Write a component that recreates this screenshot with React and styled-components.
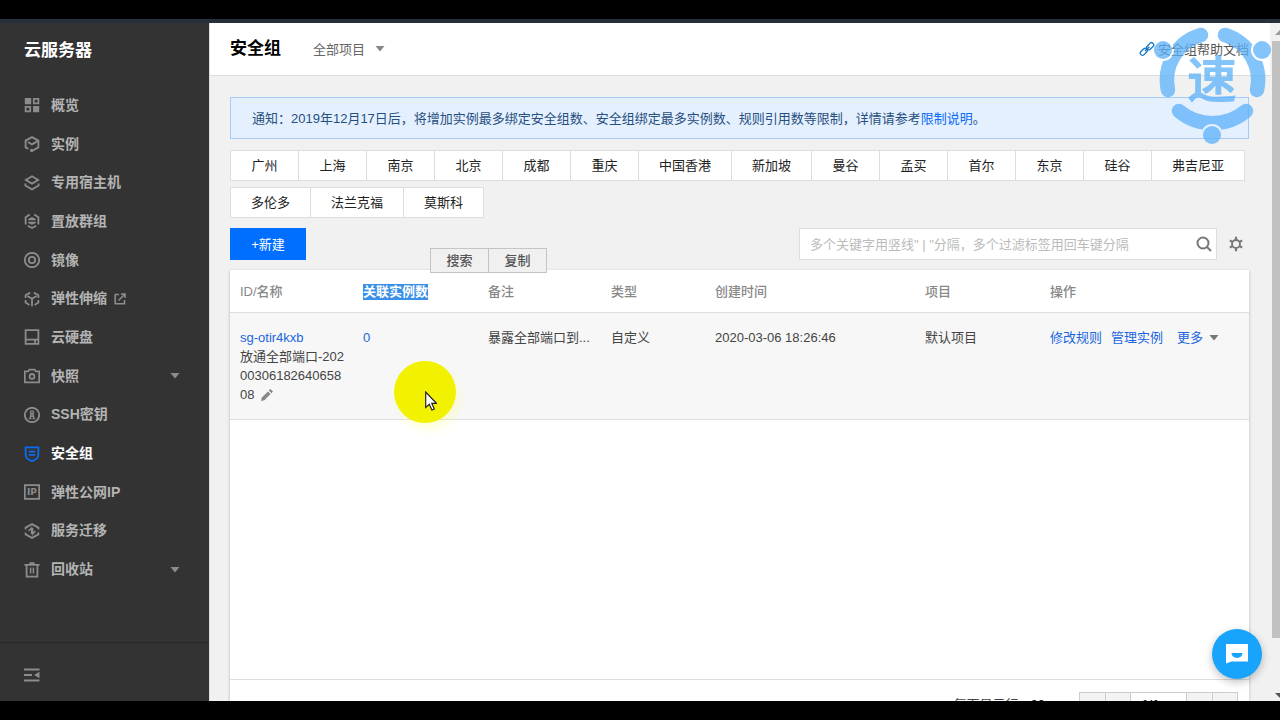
// src/pages/SecurityGroupPage.jsx
import React, { useState } from 'react';
import styled, { createGlobalStyle } from 'styled-components';

const REGIONS = [
  '广州', '上海', '南京', '北京', '成都', '重庆', '中国香港', '新加坡', '曼谷',
  '孟买', '首尔', '东京', '硅谷', '弗吉尼亚', '多伦多', '法兰克福', '莫斯科',
];

const MENU = [
  { label: '概览', icon: 'overview' },
  { label: '实例', icon: 'instance' },
  { label: '专用宿主机', icon: 'host' },
  { label: '置放群组', icon: 'group' },
  { label: '镜像', icon: 'image' },
  { label: '弹性伸缩', icon: 'scaling', external: true },
  { label: '云硬盘', icon: 'disk' },
  { label: '快照', icon: 'snapshot', expandable: true },
  { label: 'SSH密钥', icon: 'ssh' },
  { label: '安全组', icon: 'shield' },
  { label: '弹性公网IP', icon: 'ip' },
  { label: '服务迁移', icon: 'migrate' },
  { label: '回收站', icon: 'trash', expandable: true },
];

const ICONS = {
  overview: (
    <>
      <path d="M.8 1h6.4v6.2H.8zM9 9h6.2v6.2H9z" fill="currentColor" stroke="none" />
      <path d="M9.8 1.8h4.6v4.6H9.8zM1.6 9.8h4.6v4.6H1.6z" />
    </>
  ),
  instance: (
    <>
      <path d="M4.4 12.9L1.6 11.4V4.6L8 1.1l6.4 3.5v6.8L8 15" />
      <path d="M4 6L8 8.4l6-3.5" />
      <circle cx="7.6" cy="14.4" r="1.6" fill="currentColor" stroke="none" />
    </>
  ),
  host: (
    <>
      <path d="M8 1.2l6.2 3.7L8 8.6 1.8 4.9z" />
      <path d="M1.4 8.4v2.2L8 14.5l6.6-3.9V8.4" />
    </>
  ),
  group: (
    <>
      <path d="M5.8 1.6L1.6 4.2v7.2M10.2 1.6l4.2 2.6v7.2M3.8 12.8L8 15l4.2-2.2" />
      <path d="M4.4 6.6L8 4.8l3.6 1.8zM4.4 9.4L8 11l3.6-1.6z" strokeWidth="1.3" />
    </>
  ),
  image: (
    <>
      <circle cx="8" cy="8" r="7.2" />
      <circle cx="8" cy="8" r="3.2" />
    </>
  ),
  scaling: (
    <>
      <path d="M6.2 1.6L1.6 4.2v2.8M9.8 1.6l4.6 2.6v2.8M1.6 9v2.6L5.4 14M14.4 9v2.6L10.6 14" />
      <path d="M3.4 5L8 7.8 12.600 5M8 7.800V15.500" />
    </>
  ),
  disk: (
    <>
      <path d="M1.6 1.2h12.8v13.6H1.6zM1.6 10.6h12.8" />
      <path d="M11 10.6v4" />
    </>
  ),
  snapshot: (
    <>
      <path d="M.8 3.4h3.4l1.2-1.8h5.2l1.2 1.8h3.4v11H.8z" />
      <circle cx="8" cy="8.4" r="2.4" />
    </>
  ),
  ssh: (
    <>
      <circle cx="8" cy="8" r="7.2" />
      <circle cx="8" cy="5.4" r="1.5" strokeWidth="1.4" />
      <path d="M7 7l-.8 4.400M9 7l.8 4.400M5 11.600h2.400M8.600 11.600H11M6.600 9.300h2.800" strokeWidth="1.4" />
    </>
  ),
  shield: (
    <>
      <path d="M1.6 1.4h12.800V9c0 2.800-2.600 4.800-6.400 6.200C4.200 13.800 1.600 11.800 1.600 9z" />
      <path d="M4.8 5.600h6.400M4.800 8.800h6.400" />
    </>
  ),
  migrate: (
    <>
      <path d="M1.6 6.400V4.600L8 1.100l6.400 3.500v1.800M1.600 9.600v1.800L8 14.900l6.400-3.500V9.600" />
      <path d="M7.600 11V5L4.600 8M8.600 5v6l2.800-3" strokeWidth="1.5" />
    </>
  ),
  trash: (
    <>
      <path d="M.4 2.800h15.200M5.400 1.200h5.200M2.600 3.800v10.800h10.800V3.800" />
      <path d="M6.600 5.600v6M9.400 5.600v6" strokeWidth="1.5" />
    </>
  ),
  ip: (
    <>
      <path d="M.8 1.200h14.400v13.600H.8z" />
      <text x="8" y="11.400" textAnchor="middle" fontSize="9" fontWeight="700" fontFamily="DejaVu Sans, sans-serif" fill="currentColor" stroke="none">IP</text>
    </>
  ),
};

const Caret = () => (
  <svg width="10" height="6" viewBox="0 0 10 6" aria-hidden="true">
    <path d="M.5 0h9L5 5.5z" fill="currentColor" />
  </svg>
);

function Watermark() {
  return (
    <WatermarkBox>
      <svg width="120" height="120" viewBox="0 0 120 120" aria-hidden="true">
        <mask id="dots">
          <rect width="120" height="120" fill="#fff" />
          <circle cx="11" cy="25" r="11" fill="#000" />
          <circle cx="110" cy="25" r="11" fill="#000" />
          <circle cx="60" cy="110" r="11" fill="#000" />
        </mask>
        <g mask="url(#dots)" fill="none" stroke="#5db2fa" strokeWidth="14.5" strokeLinecap="round">
          <path d="M49 10A47 47 0 0 0 16 65" />
          <path d="M73 10A47 47 0 0 1 105 65" />
          <path d="M27 86A52 52 0 0 0 94 86" />
        </g>
        <g fill="#5db2fa">
          <circle cx="11" cy="25" r="9" />
          <circle cx="110" cy="25" r="9" />
          <circle cx="60" cy="110" r="9" />
        </g>
      </svg>
      <span>速</span>
    </WatermarkBox>
  );
}

export default function SecurityGroupPage() {
  const [keyword, setKeyword] = useState('');

  return (
    <Screen>
      <GlobalStyle />
      <Body>
        <Sidebar>
          <SidebarTitle>云服务器</SidebarTitle>
          <Menu>
            {MENU.map((item) => (
              <MenuItem key={item.label}>
                <MenuLink href="#" $active={item.label === '安全组'}>
                  <svg width="16" height="16" viewBox="0 0 16 16" fill="none" stroke="currentColor" strokeWidth="1.8" aria-hidden="true">
                    {ICONS[item.icon]}
                  </svg>
                  <span>{item.label}</span>
                  {item.external && (
                    <ExternalIcon width="12" height="12" viewBox="0 0 12 12" fill="none" stroke="currentColor" strokeWidth="1.6">
                      <path d="M5 1.500H1.200v9.300h9.300V7M7 1h4v4M11 1L4.500 7.500" />
                    </ExternalIcon>
                  )}
                  {item.expandable && <MenuCaret><Caret /></MenuCaret>}
                </MenuLink>
              </MenuItem>
            ))}
          </Menu>
          <SidebarFooter>
            <IconButton type="button" aria-label="收起菜单">
              <svg width="16" height="14" viewBox="0 0 16 14" aria-hidden="true">
                <path d="M0 1.500h15.500M0 7h8M0 12.500h15.500" stroke="currentColor" strokeWidth="2" />
                <path d="M15.500 3.800v6.400L10 7z" fill="currentColor" />
              </svg>
            </IconButton>
          </SidebarFooter>
        </Sidebar>

        <Main>
          <Header>
            <Title>安全组</Title>
            <Project>
              <ProjectSelect aria-label="项目">
                <option>全部项目</option>
              </ProjectSelect>
              <Caret />
            </Project>
            <HelpLink href="#">
              <svg width="16" height="16" viewBox="0 0 16 16" fill="none" stroke="#1f7ac4" strokeWidth="1.4" aria-hidden="true">
                <rect x="7.2" y="3" width="8" height="4.4" rx="2.2" transform="rotate(-45 11.2 5.2)" />
                <rect x=".8" y="8.6" width="8" height="4.4" rx="2.2" transform="rotate(-45 4.8 10.8)" />
                <path d="M6 10l4.400-4.200" />
              </svg>
              安全组帮助文档
            </HelpLink>
            <Watermark />
          </Header>

          <Content>
            <Notice>
              通知：2019年12月17日后，将增加实例最多绑定安全组数、安全组绑定最多实例数、规则引用数等限制，详情请参考<a href="#">限制说明</a>。
            </Notice>

            <Regions>
              {REGIONS.map((name) => (
                <RegionButton key={name} type="button">{name}</RegionButton>
              ))}
            </Regions>

            <Toolbar>
              <CreateButton type="button">+新建</CreateButton>
              <SearchBox>
                <SearchInput
                  aria-label="搜索安全组"
                  value={keyword}
                  onChange={(e) => setKeyword(e.target.value)}
                  placeholder={'多个关键字用竖线" | "分隔，多个过滤标签用回车键分隔'}
                />
                <IconButton type="button" aria-label="搜索">
                  <svg width="16" height="16" viewBox="0 0 16 16" fill="none" stroke="#777" strokeWidth="2" aria-hidden="true">
                    <circle cx="7" cy="7" r="5.5" />
                    <path d="M11 11l4 4" />
                  </svg>
                </IconButton>
              </SearchBox>
              <IconButton type="button" aria-label="设置">
                <svg width="14" height="16" viewBox="0 0 14 16" fill="none" stroke="#777" aria-hidden="true">
                  <circle cx="7" cy="8" r="4" strokeWidth="1.8" />
                  <path d="M7 .8v3M7 12.200v3M.8 4.400l2.600 1.500M10.600 10.100l2.600 1.500M.8 11.600l2.600-1.500M10.600 5.900l2.600-1.500" strokeWidth="2.2" />
                </svg>
              </IconButton>
            </Toolbar>

            <Panel>
              <Table>
                <colgroup>
                  <Col $w={123} />
                  <Col $w={125} />
                  <Col $w={123} />
                  <Col $w={104} />
                  <Col $w={210} />
                  <Col $w={125} />
                  <Col $w={209} />
                </colgroup>
                <thead>
                  <tr>
                    <Th>ID/名称</Th>
                    <Th>
                      <Selected>关联实例数</Selected>
                      <SelectionMenu>
                        <button type="button">搜索</button>
                        <button type="button">复制</button>
                      </SelectionMenu>
                    </Th>
                    <Th>备注</Th>
                    <Th>类型</Th>
                    <Th>创建时间</Th>
                    <Th>项目</Th>
                    <Th>操作</Th>
                  </tr>
                </thead>
                <tbody>
                  <tr>
                    <Td>
                      <a href="#">sg-otir4kxb</a>
                      <div>
                        放通全部端口-2020030618264065808
                        <EditButton type="button" aria-label="编辑名称">
                          <svg width="12" height="12" viewBox="0 0 12 12" aria-hidden="true">
                            <path d="M0 12l.8-3.400L7 2.400 9.600 5 3.400 11.200zM7.800 1.600L9.400 0 12 2.600l-1.600 1.600z" fill="#888" />
                          </svg>
                        </EditButton>
                      </div>
                    </Td>
                    <Td><a href="#">0</a></Td>
                    <Td>暴露全部端口到...</Td>
                    <Td>自定义</Td>
                    <Td>2020-03-06 18:26:46</Td>
                    <Td>默认项目</Td>
                    <Td>
                      <Actions>
                        <a href="#">修改规则</a>
                        <a href="#">管理实例</a>
                        <MoreButton type="button">更多 <Caret /></MoreButton>
                      </Actions>
                    </Td>
                  </tr>
                </tbody>
              </Table>
              <Pagination>
                <span>每页显示行</span>
                <PageSize>20</PageSize>
                <Pager>
                  <button type="button" aria-label="第一页" />
                  <button type="button" aria-label="上一页" />
                  <strong>1/1</strong>
                  <button type="button" aria-label="下一页" />
                  <button type="button" aria-label="最后一页" />
                </Pager>
              </Pagination>
              <Pointer>
                <svg width="12" height="20" viewBox="0 0 12 20" aria-hidden="true">
                  <path d="M.7 1v15.500l3.600-3.300 2.600 5.800 2.400-1-2.500-5.700h4.600z" fill="#fff" stroke="#222" strokeWidth="1.2" />
                </svg>
              </Pointer>
            </Panel>
          </Content>

          <ChatButton type="button" aria-label="在线客服">
            <svg width="22" height="20" viewBox="0 0 22 20" aria-hidden="true">
              <path d="M0 0h22v17.400H5.500L0 19.500z" fill="#fff" />
              <path d="M5.500 9h11a5.500 5 0 0 1-11 0z" fill="#18a3fc" />
            </svg>
          </ChatButton>
        </Main>

        <Scrollbar>
          <ScrollArrow viewBox="0 0 8 6"><path d="M8 0v5H3z" fill="#9a9a9a" /></ScrollArrow>
          <Thumb />
          <ScrollArrow viewBox="0 0 8 6"><path d="M3 0h5v5z" fill="#555" /></ScrollArrow>
        </Scrollbar>
      </Body>
    </Screen>
  );
}

const GlobalStyle = createGlobalStyle`
  * {
    box-sizing: border-box;
  }

  body {
    margin: 0;
    background: #000;
    color: #444;
    font-family: "Liberation Sans", "Noto Sans CJK SC", sans-serif;
    font-size: 13px;
    line-height: 19px;
  }

  button,
  input,
  select {
    font: inherit;
    color: inherit;
  }

  a {
    color: #1a66e0;
    text-decoration: none;
  }

  svg {
    flex: none;
  }
`;

const Screen = styled.div`
  height: 100vh;
  padding: 19px 0;
  background: #000;
`;

const Body = styled.div`
  display: flex;
  height: 100%;
  border-top: 4px solid #272f3d;
  overflow: hidden;
`;

const Sidebar = styled.aside`
  display: flex;
  flex-direction: column;
  flex: none;
  width: 210px;
  background: #333;
  border-right: 1px solid #ddd;
`;

const SidebarTitle = styled.h2`
  margin: 0;
  padding: 16px 24px 23px;
  color: #fff;
  font-size: 17px;
  line-height: 24px;
`;

const Menu = styled.ul`
  display: grid;
  grid-auto-rows: 1fr;
  flex: 1;
  margin: 0;
  padding: 0 0 53px;
  list-style: none;
`;

const MenuItem = styled.li`
  display: flex;
`;

const MenuLink = styled.a`
  display: flex;
  align-items: center;
  flex: 1;
  gap: 11px;
  padding: 0 29px 0 24px;
  color: ${(props) => (props.$active ? '#fff' : '#b4b4b4')};
  font-size: 14px;
  font-weight: 700;

  svg {
    color: ${(props) => (props.$active ? '#0a6cf5' : '#8c8c8c')};
  }
`;

const ExternalIcon = styled.svg`
  margin-left: -4px;
`;

const MenuCaret = styled.span`
  display: flex;
  margin-left: auto;
`;

const IconButton = styled.button`
  display: flex;
  padding: 0;
  border: none;
  background: none;
  cursor: pointer;
`;

const SidebarFooter = styled.div`
  display: flex;
  align-items: center;
  height: 59px;
  padding: 6px 24px 0;
  border-top: 1px solid #292929;
  color: #8c8c8c;
`;

const Main = styled.main`
  position: relative;
  display: flex;
  flex-direction: column;
  flex: 1;
  min-width: 0;
  background: #f1f1f1;
`;

const Header = styled.header`
  position: relative;
  display: flex;
  align-items: center;
  flex: none;
  height: 53px;
  padding: 0 21px 0 20px;
  background: #fff;
  border-bottom: 1px solid #ddd;
`;

const Title = styled.h1`
  margin: 0 32px 0 0;
  color: #000;
  font-size: 17px;
  line-height: 24px;
`;

const Project = styled.div`
  display: flex;
  align-items: center;
  gap: 9px;
  color: #888;
`;

const ProjectSelect = styled.select`
  padding: 0;
  border: none;
  background: none;
  appearance: none;
  color: #666;
`;

const HelpLink = styled.a`
  display: flex;
  align-items: center;
  gap: 3px;
  margin-left: auto;
  color: #555;
`;

const WatermarkBox = styled.div`
  position: absolute;
  top: 2px;
  right: -2px;
  z-index: 5;
  display: grid;
  place-items: center;
  opacity: 0.76;
  pointer-events: none;

  svg,
  span {
    grid-area: 1 / 1;
  }

  span {
    padding-bottom: 8px;
    color: #5db2fa;
    font-size: 50px;
    font-weight: 700;
    line-height: 50px;
  }
`;

const Content = styled.div`
  display: flex;
  flex-direction: column;
  flex: 1;
  min-height: 0;
  padding: 21px 21px 0 20px;
`;

const Notice = styled.p`
  margin: 0 0 11px;
  padding: 11px 21px 10px;
  border: 1px solid #a5cbf7;
  background: #e5f0ff;
  color: #264f80;

  a {
    color: #0a6cf5;
  }
`;

const Regions = styled.div`
  display: flex;
  flex-wrap: wrap;
  gap: 6px 0;
  padding-left: 1px;
`;

const RegionButton = styled.button`
  min-width: 69px;
  height: 31px;
  margin-left: -1px;
  padding: 0 20px;
  border: 1px solid #ddd;
  background: #fff;
  color: #222;
  cursor: pointer;
`;

const Toolbar = styled.div`
  display: flex;
  align-items: center;
  gap: 12px;
  margin: 10px 0;
  padding-right: 6px;
`;

const CreateButton = styled.button`
  width: 76px;
  height: 32px;
  padding: 0;
  border: none;
  background: #006eff;
  color: #fff;
  cursor: pointer;
`;

const SearchBox = styled.div`
  display: flex;
  align-items: center;
  width: 418px;
  height: 32px;
  margin-left: auto;
  padding: 0 4px 0 10px;
  border: 1px solid #ddd;
  background: #fff;
`;

const SearchInput = styled.input`
  flex: 1;
  min-width: 0;
  padding: 0;
  border: none;
  outline: none;

  &::placeholder {
    color: #bbb;
  }
`;

const Panel = styled.section`
  position: relative;
  display: flex;
  flex-direction: column;
  flex: 1;
  min-height: 0;
  background: #fff;
  box-shadow: 0 1px 3px rgba(0, 0, 0, 0.25);
`;

const Table = styled.table`
  width: 100%;
  table-layout: fixed;
  border-collapse: separate;
  border-spacing: 0;

  tbody {
    background: #f7f7f7;
  }
`;

const Col = styled.col`
  width: ${(props) => props.$w}px;
`;

const Th = styled.th`
  position: relative;
  padding: 12px 8px 11px 10px;
  border-bottom: 1px solid #ddd;
  color: #888;
  font-weight: 500;
  text-align: left;
`;

const Td = styled.td`
  padding: 15px 8px 15px 10px;
  border-bottom: 1px solid #ddd;
  vertical-align: top;
  word-break: break-all;
`;

const Selected = styled.span`
  display: inline-block;
  background: #3b8fe8;
  color: #fff;
  font-weight: 700;
  line-height: 16px;
`;

const SelectionMenu = styled.div`
  position: absolute;
  top: -22px;
  left: 77px;
  z-index: 2;
  display: flex;

  button {
    width: 59px;
    height: 25px;
    padding: 0;
    border: 1px solid #c4c4c4;
    background: #f0f0f0;
    color: #555;
    cursor: pointer;
  }

  button + button {
    margin-left: -1px;
  }
`;

const EditButton = styled.button`
  margin-left: 7px;
  padding: 0;
  border: none;
  background: none;
  line-height: 12px;
  vertical-align: -2px;
  cursor: pointer;
`;

const Actions = styled.div`
  display: flex;
  gap: 9px;
`;

const MoreButton = styled.button`
  display: flex;
  align-items: center;
  gap: 6px;
  margin-left: 5px;
  padding: 0;
  border: none;
  background: none;
  color: #1a66e0;
  cursor: pointer;

  svg {
    color: #777;
  }
`;

const Pagination = styled.div`
  display: flex;
  align-items: flex-start;
  justify-content: flex-end;
  flex: none;
  height: 22px;
  margin-top: auto;
  padding: 12px 11px 0 0;
  border-top: 1px solid #ddd;
  line-height: 26px;
  overflow: hidden;
`;

const PageSize = styled.span`
  margin: 0 34px 0 12px;
  color: #111;
`;

const Pager = styled.div`
  display: flex;
  height: 28px;
  border: 1px solid #ccc;

  button {
    width: 25px;
    padding: 0;
    border: none;
    background: #f3f3f3;
  }

  button + button {
    border-left: 1px solid #ccc;
  }

  strong {
    width: 57px;
    padding-right: 16px;
    border: solid #ccc;
    border-width: 0 1px;
    color: #222;
    line-height: 24px;
    text-align: center;
  }
`;

const Pointer = styled.div`
  position: absolute;
  top: 91px;
  left: 164px;
  width: 62px;
  height: 62px;
  padding: 30px 0 0 31px;
  border-radius: 50%;
  background: #f2f200;
  box-shadow: 3px 6px 8px rgba(255, 255, 120, 0.3);
  pointer-events: none;
`;

const ChatButton = styled.button`
  position: absolute;
  right: 8px;
  bottom: 22px;
  display: flex;
  align-items: center;
  justify-content: center;
  width: 50px;
  height: 50px;
  padding: 0;
  border: none;
  border-radius: 50%;
  background: #18a3fc;
  box-shadow: 0 3px 8px rgba(0, 0, 0, 0.25);
  cursor: pointer;
`;

const Scrollbar = styled.div`
  display: flex;
  flex-direction: column;
  align-items: flex-end;
  flex: none;
  width: 10px;
  padding: 7px 0 2px;
  background: #f1f1f1;
`;

const ScrollArrow = styled.svg`
  width: 8px;
  height: 6px;
`;

const Thumb = styled.div`
  flex: 1;
  width: 8px;
  margin: 5px 0 55px;
  background: #c1c1c1;
`;
